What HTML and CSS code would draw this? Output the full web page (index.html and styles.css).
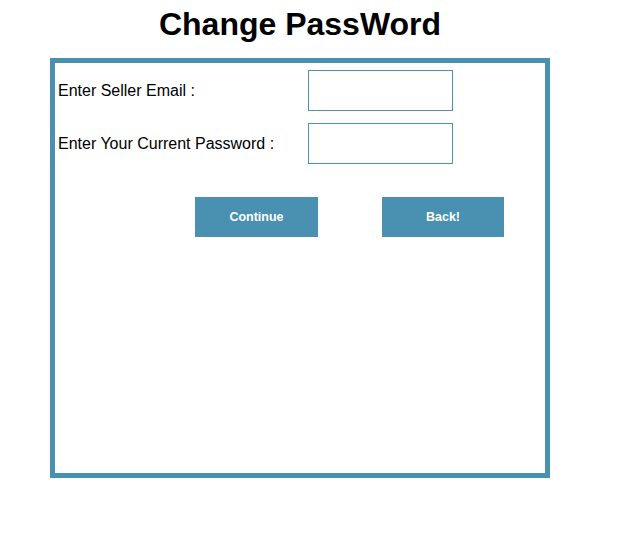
FILE: index.html
```html
<!DOCTYPE html>
<html>
<head>
<meta charset="utf-8">
<title>Change PassWord</title>
<link rel="stylesheet" href="styles.css">
</head>
<body>
<div class="page">
  <h1 class="title">Change PassWord</h1>
  <form class="box">
    <div class="row">
      <label class="label">Enter Seller Email :</label>
      <input class="field" type="text">
    </div>
    <div class="row row-second">
      <label class="label">Enter Your Current Password :</label>
      <input class="field" type="password">
    </div>
    <div class="actions">
      <button type="button" class="btn">Continue</button>
      <button type="button" class="btn btn-back">Back!</button>
    </div>
  </form>
</div>
</body>
</html>
```
FILE: styles.css
```css
html, body {
  margin: 0;
  padding: 0;
  background: #ffffff;
}
body {
  font-family: "Liberation Sans", Arial, sans-serif;
  color: #000;
}
.page {
  width: 500px;
  margin-left: 50px;
}
.title {
  margin: 0;
  padding-top: 6px;
  height: 58px;
  box-sizing: border-box;
  font-size: 32px;
  line-height: 37px;
  font-weight: bold;
  text-align: center;
}
.box {
  margin: 0;
  box-sizing: border-box;
  width: 500px;
  height: 420px;
  border: 5px solid #4a90b0;
  padding: 7px 0 0 3px;
}
.row {
  display: flex;
  align-items: center;
  height: 41px;
}
.row-second {
  margin-top: 12px;
}
.label {
  width: 250px;
  font-size: 16px;
  line-height: 18px;
}
.field {
  box-sizing: border-box;
  width: 145px;
  height: 41px;
  margin: 0;
  border: 1px solid #4a90b0;
  background: #fff;
  padding: 0 4px;
  outline: none;
}
.actions {
  display: flex;
  gap: 64px;
  margin-top: 33px;
  padding-left: 137px;
}
.btn {
  box-sizing: border-box;
  width: 123px;
  height: 40px;
  margin: 0;
  border: none;
  background: #4a90b0;
  color: #ffffff;
  font-family: "Liberation Sans", Arial, sans-serif;
  font-size: 12.5px;
  font-weight: bold;
  cursor: pointer;
}
.btn-back {
  width: 122px;
}
```
